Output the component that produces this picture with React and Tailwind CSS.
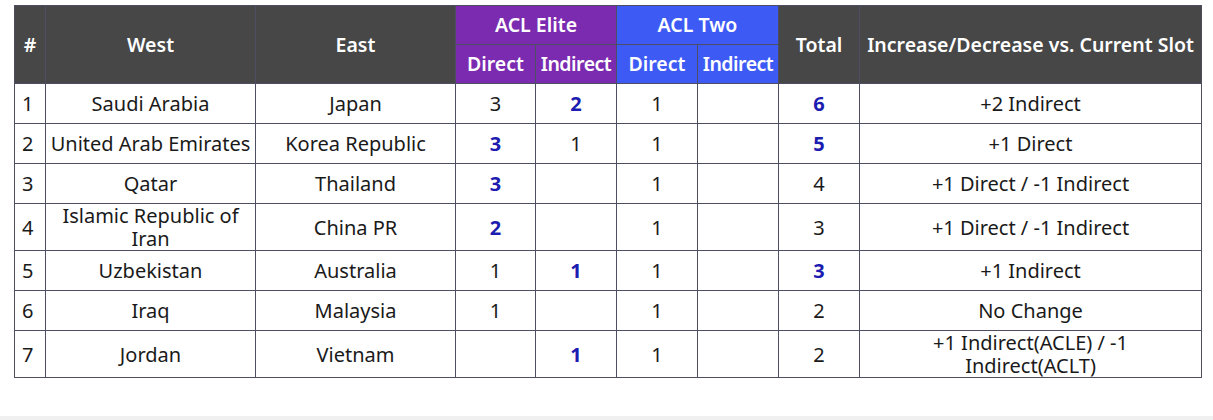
const rows = [
  { n: 1, west: "Saudi Arabia", east: "Japan", ed: "3", ei: "2", td: "1", ti: "", total: "6", change: "+2 Indirect", hl: ["ei", "total"] },
  { n: 2, west: "United Arab Emirates", east: "Korea Republic", ed: "3", ei: "1", td: "1", ti: "", total: "5", change: "+1 Direct", hl: ["ed", "total"] },
  { n: 3, west: "Qatar", east: "Thailand", ed: "3", ei: "", td: "1", ti: "", total: "4", change: "+1 Direct / -1 Indirect", hl: ["ed"] },
  { n: 4, west: <>Islamic Republic of<br />Iran</>, east: "China PR", ed: "2", ei: "", td: "1", ti: "", total: "3", change: "+1 Direct / -1 Indirect", hl: ["ed"], tall: true },
  { n: 5, west: "Uzbekistan", east: "Australia", ed: "1", ei: "1", td: "1", ti: "", total: "3", change: "+1 Indirect", hl: ["ei", "total"] },
  { n: 6, west: "Iraq", east: "Malaysia", ed: "1", ei: "", td: "1", ti: "", total: "2", change: "No Change", hl: [] },
  { n: 7, west: "Jordan", east: "Vietnam", ed: "", ei: "1", td: "1", ti: "", total: "2", change: <>+1 Indirect(ACLE) / -1<br />Indirect(ACLT)</>, hl: ["ei"], tall: true },
];

const cell = "border border-[#4e4e62] text-center align-middle p-0 leading-[23px] whitespace-nowrap";
const head = "border border-[#4e4e62] text-center align-middle font-semibold text-white leading-[22px] p-0 whitespace-nowrap";

function Num({ row, k }) {
  const on = row.hl.includes(k);
  return (
    <td className={`${cell} ${on ? "font-bold text-[#1c1cb0]" : ""}`}>{row[k]}</td>
  );
}

export default function App() {
  return (
    <div className="bg-white w-[1213px] h-[420px] flex flex-col" style={{ fontFamily: "'Noto Sans', sans-serif" }}>
      <div className="flex-1 pl-[14px] pt-[5px]">
        <table className="table-fixed border-collapse text-[20px] text-[#1a1a1a] w-[1187px]">
          <colgroup>
            <col className="w-[31px]" />
            <col className="w-[210px]" />
            <col className="w-[200px]" />
            <col className="w-[80px]" />
            <col className="w-[81px]" />
            <col className="w-[81px]" />
            <col className="w-[81px]" />
            <col className="w-[81px]" />
            <col className="w-[342px]" />
          </colgroup>
          <thead className="text-[19.5px]">
            <tr className="h-[39px]">
              <th rowSpan={2} className={`${head} bg-[#474747]`}>#</th>
              <th rowSpan={2} className={`${head} bg-[#474747]`}>West</th>
              <th rowSpan={2} className={`${head} bg-[#474747]`}>East</th>
              <th colSpan={2} className={`${head} bg-[#7b2bb0]`}>ACL Elite</th>
              <th colSpan={2} className={`${head} bg-[#3d5af5]`}>ACL Two</th>
              <th rowSpan={2} className={`${head} bg-[#474747]`}>Total</th>
              <th rowSpan={2} className={`${head} bg-[#474747]`}>Increase/Decrease vs. Current Slot</th>
            </tr>
            <tr className="h-[39px]">
              <th className={`${head} bg-[#7b2bb0]`}>Direct</th>
              <th className={`${head} bg-[#7b2bb0] tracking-[-0.5px]`}>Indirect</th>
              <th className={`${head} bg-[#3d5af5]`}>Direct</th>
              <th className={`${head} bg-[#3d5af5] tracking-[-0.5px]`}>Indirect</th>
            </tr>
          </thead>
          <tbody>
            {rows.map((r) => (
              <tr key={r.n} className={r.tall ? "h-[47px]" : "h-[40px]"}>
                <td className={`${cell} text-left pl-[7px]`}>{r.n}</td>
                <td className={cell}>{r.west}</td>
                <td className={cell}>{r.east}</td>
                <Num row={r} k="ed" />
                <Num row={r} k="ei" />
                <Num row={r} k="td" />
                <Num row={r} k="ti" />
                <Num row={r} k="total" />
                <td className={cell}>{r.change}</td>
              </tr>
            ))}
          </tbody>
        </table>
      </div>
      <div className="h-[4px] bg-[#f0f0f0]" />
    </div>
  );
}
